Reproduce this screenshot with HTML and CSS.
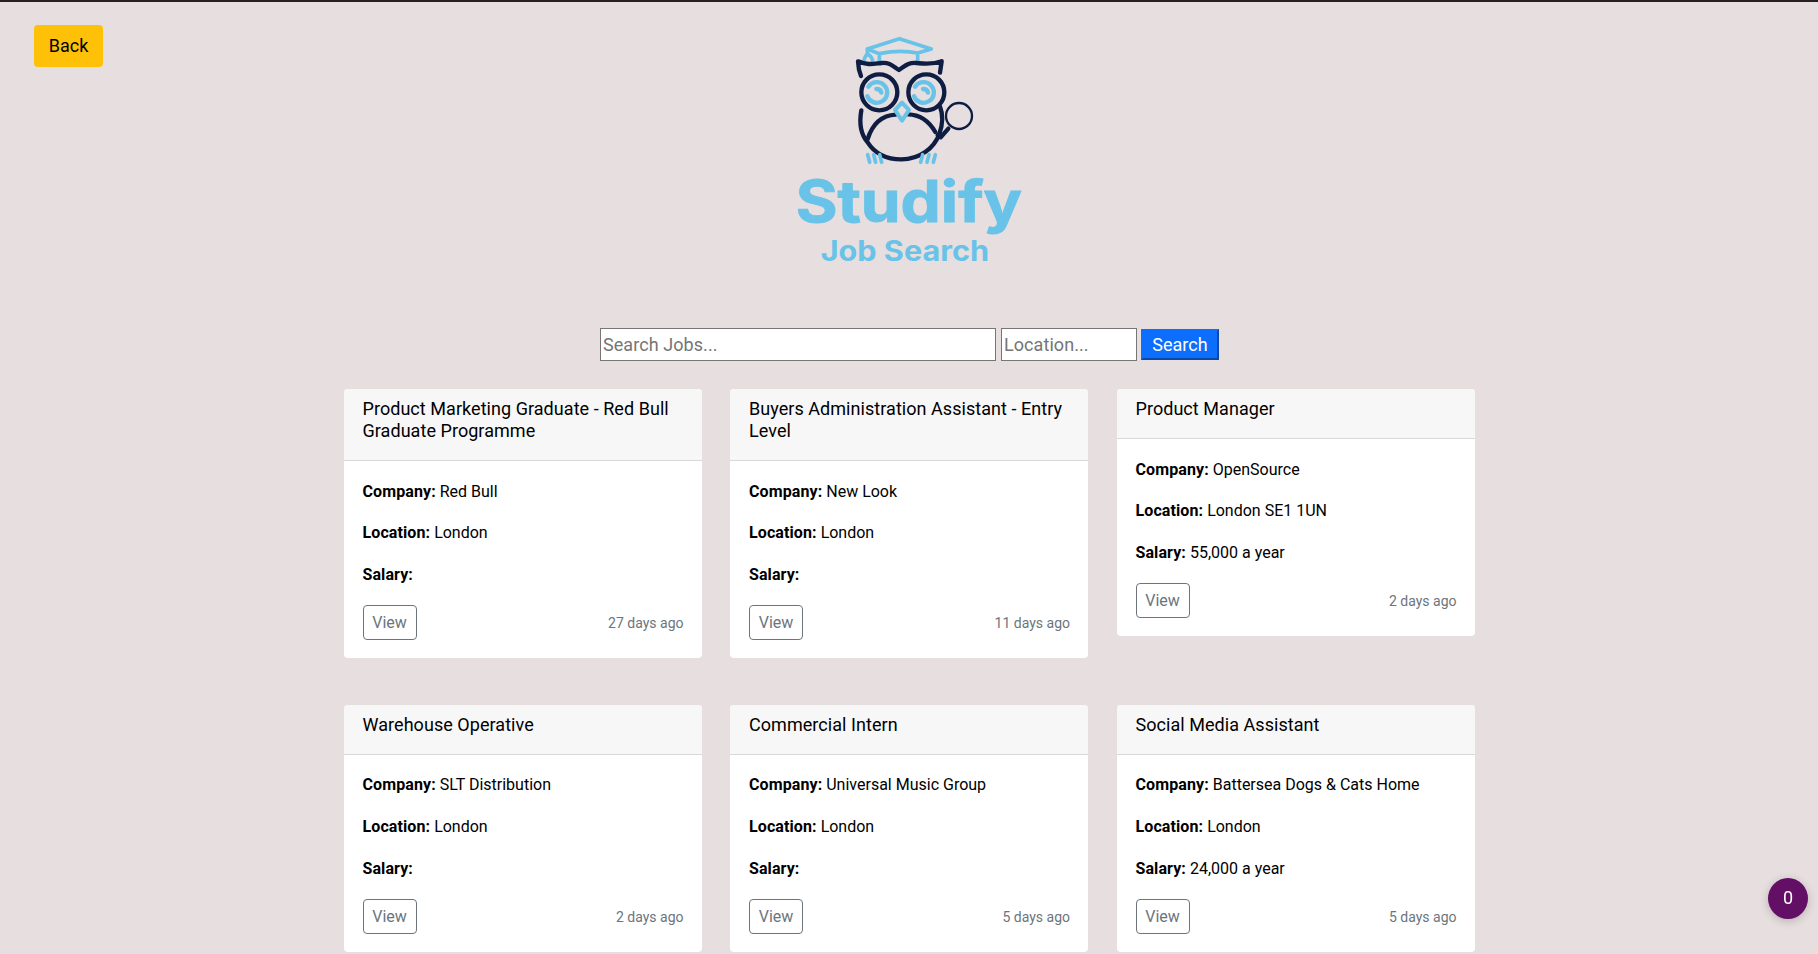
FILE: index.html
```html
<!DOCTYPE html>
<html lang="en">
<head>
<meta charset="utf-8">
<title>Studify Job Search</title>
<link rel="stylesheet" href="styles.css">
</head>
<body>
<header class="top">
  <button class="back">Back</button>
  <svg class="logo" width="260" height="260" viewBox="0 0 780 780" fill="none" stroke-linecap="round" stroke-linejoin="round">
    <g class="sky" stroke-width="11">
      <path d="M262 87L358 56L454 87L413 99Q358 88 298 101L262 87V104M298 101V125M413 99V125"/>
      <path d="M263 101Q253 111 252 121M263 101Q277 111 278 123"/>
      <path d="M265 200A31 31 0 1 1 262 229M289 207Q302 207 304 218" stroke-width="13"/>
      <path d="M405 200A31 31 0 1 1 402 229M429 207Q442 207 444 218" stroke-width="13"/>
    </g>
    <g class="navy" stroke-width="13">
      <path d="M243 168Q235 148 234 124C265 137 282 131 305 129C331 127 339 139 357 150C375 139 382 127 409 129C432 131 455 135 485 124L480 158"/>
      <circle cx="298" cy="217" r="54"/><circle cx="439" cy="217" r="54"/>
      <path d="M244 271C236 315 244 345 263 367C286 403 319 418 364 418C421 418 463 383 478 342C488 314 490 285 480 260"/>
      <path d="M263 357C278 310 309 286 347 284M384 283C422 284 448 305 466 336"/>
      <path d="M505 326L482 352L473 345" stroke-width="13"/>
      <circle cx="537" cy="288" r="39" stroke-width="7"/>
    </g>
    <path class="sky" d="M366 248L387 270L366 302L345 270Z" stroke-width="12"/>
    <path class="sky" d="M263 404L269 427M281 404L287 427M299 404L305 427M428 404L422 427M447 404L441 427M466 404L460 427" stroke-width="11"/>
    <g class="words">
      <text x="47" y="605" font-size="173" textLength="679" lengthAdjust="spacingAndGlyphs" stroke-width="3">Studify</text>
      <text x="122" y="722" font-size="84" textLength="505" lengthAdjust="spacingAndGlyphs">Job Search</text>
    </g>
  </svg>
</header>
<form class="search">
  <input class="jobs" placeholder="Search Jobs...">
  <input class="place" placeholder="Location...">
  <button class="go" type="button">Search</button>
</form>
<main class="cards">
  <article class="card"><h2>Product Marketing Graduate - Red Bull Graduate Programme</h2><div class="body"><p><b>Company:</b> Red Bull</p><p><b>Location:</b> London</p><p><b>Salary:</b></p><div class="foot"><button class="view">View</button><small>27 days ago</small></div></div></article>
  <article class="card"><h2>Buyers Administration Assistant - Entry Level</h2><div class="body"><p><b>Company:</b> New Look</p><p><b>Location:</b> London</p><p><b>Salary:</b></p><div class="foot"><button class="view">View</button><small>11 days ago</small></div></div></article>
  <article class="card"><h2>Product Manager</h2><div class="body"><p><b>Company:</b> OpenSource</p><p><b>Location:</b> London SE1 1UN</p><p><b>Salary:</b> 55,000 a year</p><div class="foot"><button class="view">View</button><small>2 days ago</small></div></div></article>
  <article class="card"><h2>Warehouse Operative</h2><div class="body"><p><b>Company:</b> SLT Distribution</p><p><b>Location:</b> London</p><p><b>Salary:</b></p><div class="foot"><button class="view">View</button><small>2 days ago</small></div></div></article>
  <article class="card"><h2>Commercial Intern</h2><div class="body"><p><b>Company:</b> Universal Music Group</p><p><b>Location:</b> London</p><p><b>Salary:</b></p><div class="foot"><button class="view">View</button><small>5 days ago</small></div></div></article>
  <article class="card"><h2>Social Media Assistant</h2><div class="body"><p><b>Company:</b> Battersea Dogs &amp; Cats Home</p><p><b>Location:</b> London</p><p><b>Salary:</b> 24,000 a year</p><div class="foot"><button class="view">View</button><small>5 days ago</small></div></div></article>
</main>
<div class="badge">0</div>
</body>
</html>
```
FILE: styles.css
```css
* { box-sizing: border-box; }
html, body { height: 100%; overflow: hidden; }
body {
  margin: 0;
  border-top: 2px solid #24211f;
  background: #e6dedf;
  color: #000;
  font: 16px/24px Roboto, sans-serif;
}
button, input { font-family: inherit; }
.top {
  display: grid;
  grid-template-columns: 1fr 260px 1fr;
  align-items: start;
  height: 326px;
  padding: 18px 34px 0;
}
.back {
  justify-self: start;
  width: 69px;
  height: 42px;
  margin-top: 5px;
  padding: 0 0 2px;
  border: 0;
  border-radius: 4px;
  background: #ffc107;
  color: #000;
  font-size: 18px;
}
.logo { margin-left: 1px; }
.sky { stroke: #69c3e8; }
.navy { stroke: #101d42; }
.words { fill: #69c3e8; stroke: #69c3e8; stroke-width: 0; font-family: Inter, sans-serif; font-weight: 700; }
.search {
  display: flex;
  justify-content: center;
  align-items: center;
  height: 33px;
  padding-left: 1px;
}
.search input {
  height: 33px;
  padding: 1px 2px;
  border: 1px solid #767676;
  border-radius: 0;
  background: #fff;
  font-size: 18px;
  letter-spacing: 0.07px;
}
.search input::placeholder { color: #757575; }
.search .jobs { width: 396px; margin-right: 5px; }
.search .place { width: 136px; margin-right: 4px; }
.go {
  width: 78px;
  height: 31px;
  padding: 0;
  border: 2px outset #0d6efd;
  background: #0d6efd;
  color: #fff;
  font-size: 18px;
}
.cards {
  display: grid;
  grid-template-columns: repeat(3, 358px);
  justify-content: space-between;
  row-gap: 47px;
  align-items: start;
  width: 1131px;
  margin: 28px auto 0;
}
.card {
  border-radius: 4px;
  background: #fff;
  overflow: hidden;
}
.card h2 {
  margin: 0;
  padding: 9px 18px 18px 19px;
  border-bottom: 1px solid #d8d8d8;
  background: #f7f7f7;
  font-size: 18px;
  font-weight: 400;
  letter-spacing: 0.05px;
  line-height: 22px;
}
.body { padding: 18px 18px 18px 19px; }
.body p { margin: 0 0 18px; }
.body b { font-weight: 700; letter-spacing: 0.1px; }
.card:nth-child(-n+3) p:first-child { padding-top: 1px; margin-bottom: 17px; }
.foot { display: flex; justify-content: space-between; align-items: center; }
.view {
  width: 54px;
  height: 35px;
  padding: 0;
  border: 1px solid #6c757d;
  border-radius: 4px;
  background: #fff;
  color: #6c757d;
  font-size: 16px;
}
.foot small { color: #6c757d; font-size: 14px; }
.badge {
  position: fixed;
  right: 10px;
  bottom: 35px;
  width: 40px;
  height: 41px;
  border-radius: 50%;
  background: #640f66;
  box-shadow: 0 2px 10px rgba(0, 0, 0, .2);
  color: #fff;
  font-size: 18px;
  line-height: 40px;
  text-align: center;
}
```
